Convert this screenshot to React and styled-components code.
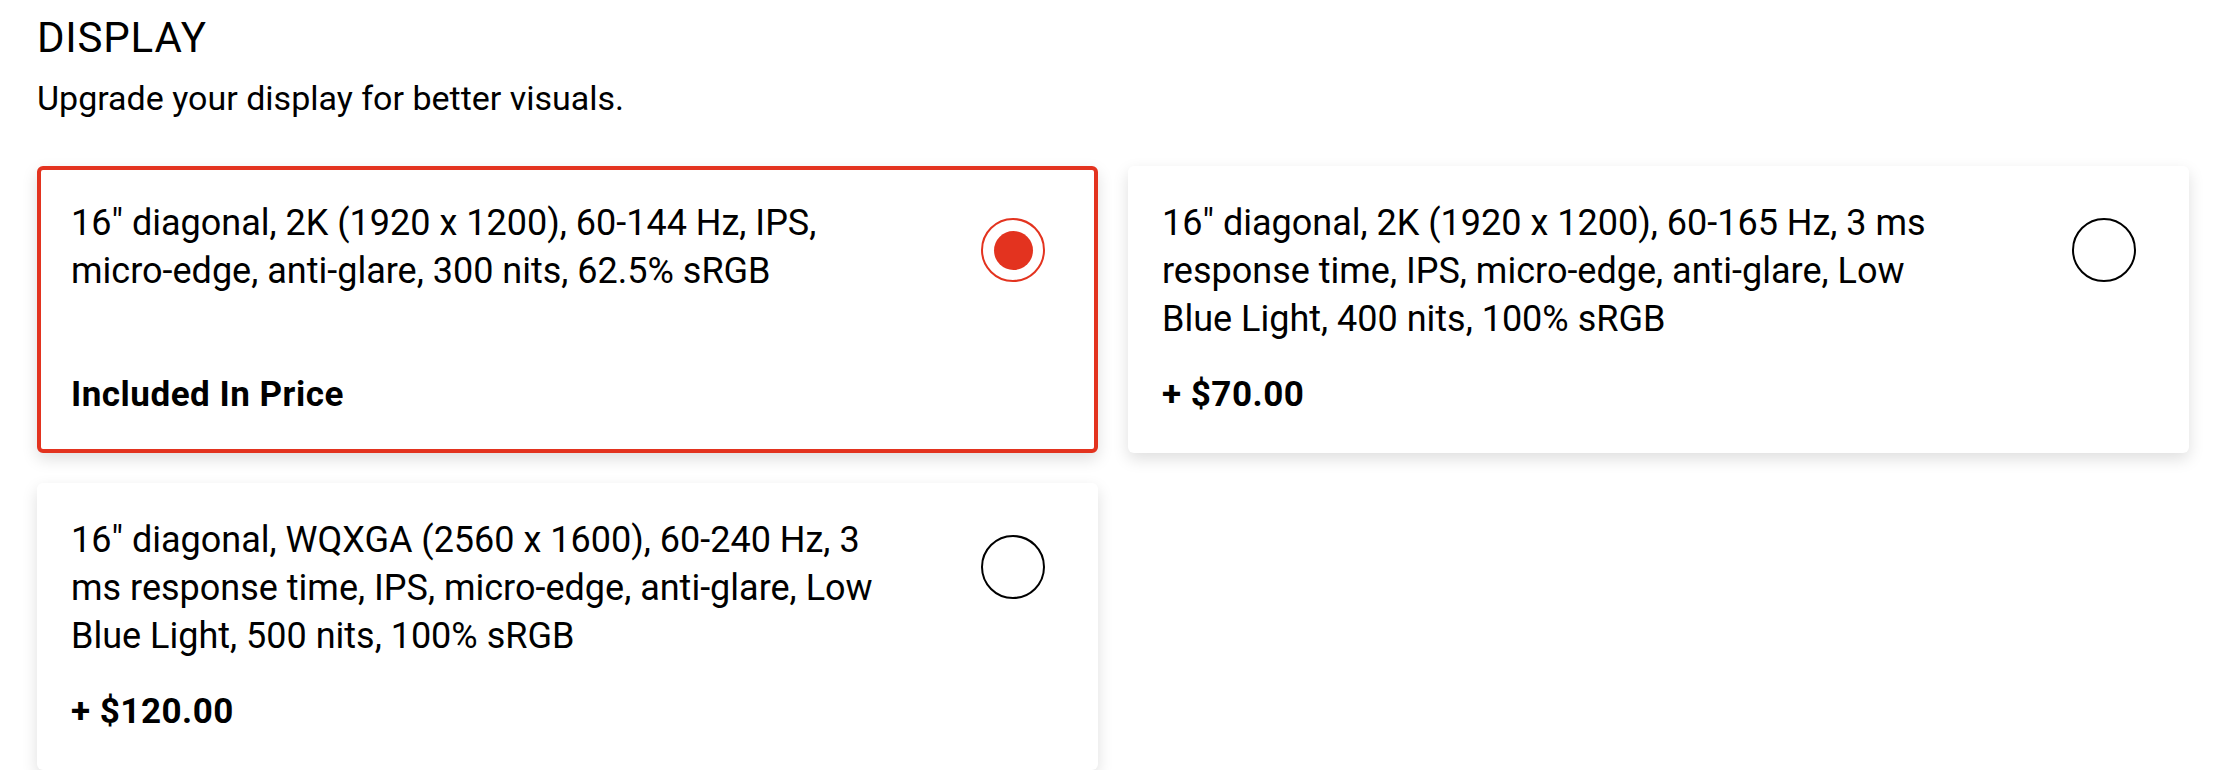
import React, { useState } from "react";
import styled, { createGlobalStyle } from "styled-components";

const GlobalStyle = createGlobalStyle`
  body {
    margin: 0;
    background: #ffffff;
    font-family: Roboto, "Liberation Sans", Arial, sans-serif;
    color: #000;
  }
`;

const Page = styled.div`
  padding: 13px 24px 0 37px;
`;

const Title = styled.h2`
  margin: 0;
  font-size: 42px;
  font-weight: 400;
  line-height: 50px;
  letter-spacing: 0.8px;
`;

const Subtitle = styled.p`
  margin: 14px 0 0;
  font-size: 34px;
  font-weight: 400;
  line-height: 43px;
`;

const Grid = styled.div`
  margin-top: 46px;
  display: grid;
  grid-template-columns: 1fr 1fr;
  gap: 30px;
`;

const Card = styled.div`
  display: flex;
  justify-content: space-between;
  gap: 40px;
  padding: 29px 49px 33px 30px;
  background: #fff;
  border: 4px solid ${(p) => (p.$selected ? "#e3331f" : "transparent")};
  border-radius: 6px;
  box-shadow: 0 6px 16px rgba(0, 0, 0, 0.13);
  cursor: pointer;
`;

const Content = styled.div`
  flex: 1;
  display: flex;
  flex-direction: column;
`;

const Spec = styled.div`
  max-width: 811px;
  font-size: 36px;
  line-height: 48px;
  margin-bottom: 31px;
`;

// keeps "micro-edge", "60-144" etc. from breaking at the hyphen
const Word = styled.span`
  white-space: nowrap;
`;

const Price = styled.div`
  margin-top: auto;
  font-size: 35px;
  font-weight: 700;
  line-height: 42px;
  letter-spacing: 0.5px;
`;

const Radio = styled.div`
  flex: none;
  width: 64px;
  height: 64px;
  margin-top: 19px;
  box-sizing: border-box;
  border-radius: 50%;
  border: 2px solid ${(p) => (p.$selected ? "#e3331f" : "#000")};
  display: flex;
  align-items: center;
  justify-content: center;

  &::after {
    content: "";
    width: 39px;
    height: 39px;
    border-radius: 50%;
    background: #e3331f;
    display: ${(p) => (p.$selected ? "block" : "none")};
  }
`;

const options = [
  {
    spec: "16\" diagonal, 2K (1920 x 1200), 60-144 Hz, IPS, micro-edge, anti-glare, 300 nits, 62.5% sRGB",
    price: "Included In Price",
  },
  {
    spec: "16\" diagonal, 2K (1920 x 1200), 60-165 Hz, 3 ms response time, IPS, micro-edge, anti-glare, Low Blue Light, 400 nits, 100% sRGB",
    price: "+ $70.00",
  },
  {
    spec: "16\" diagonal, WQXGA (2560 x 1600), 60-240 Hz, 3 ms response time, IPS, micro-edge, anti-glare, Low Blue Light, 500 nits, 100% sRGB",
    price: "+ $120.00",
  },
];

function SpecText({ text }) {
  return text
    .split(/(\S+-\S+)/)
    .map((part, i) => (i % 2 ? <Word key={i}>{part}</Word> : part));
}

export default function App() {
  const [selected, setSelected] = useState(0);

  return (
    <Page>
      <GlobalStyle />
      <Title>DISPLAY</Title>
      <Subtitle>Upgrade your display for better visuals.</Subtitle>
      <Grid>
        {options.map((o, i) => (
          <Card key={i} $selected={selected === i} onClick={() => setSelected(i)}>
            <Content>
              <Spec>
                <SpecText text={o.spec} />
              </Spec>
              <Price>{o.price}</Price>
            </Content>
            <Radio $selected={selected === i} />
          </Card>
        ))}
      </Grid>
    </Page>
  );
}
